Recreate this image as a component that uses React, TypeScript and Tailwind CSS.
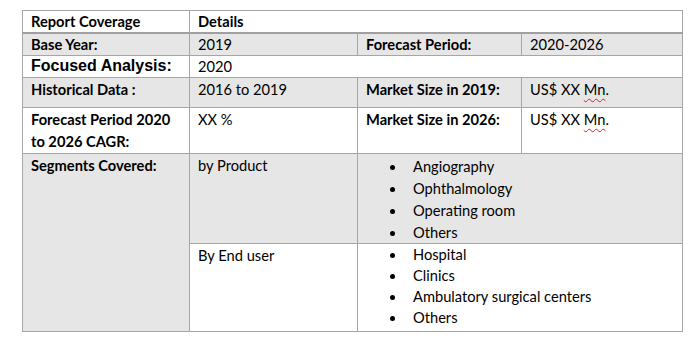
import React from "react";

const cal = { fontFamily: "Lato, 'Open Sans', sans-serif" };

function Mn() {
  return (
    <span>
      US$ XX{" "}
      <span className="underline decoration-wavy decoration-[#e02020] decoration-1 underline-offset-[3px]">Mn</span>.
    </span>
  );
}

function Bullets({ items, gap }: { items: string[]; gap: string }) {
  return (
    <ul className={`flex flex-col ${gap}`}>
      {items.map((t) => (
        <li key={t} className="flex items-center h-[20px]">
          <span className="ml-[24px] w-[5px] h-[5px] rounded-full bg-black shrink-0" />
          <span className="ml-[18px]">{t}</span>
        </li>
      ))}
    </ul>
  );
}

export default function App() {
  const base = "border border-[#a6a6a6] align-top pl-[8px] pr-[4px]";
  const td = `${base} leading-[20px] pt-[1px]`;
  const td2 = `${base} leading-[20px] pt-[2px]`;
  return (
    <div className="w-[690px] h-[341px] bg-white pt-[10px] pl-[22px]" style={cal}>
      <table className="table-fixed border-collapse text-[14.67px] text-black w-[660px]">
        <colgroup>
          <col className="w-[167px]" />
          <col className="w-[168px]" />
          <col className="w-[164px]" />
          <col className="w-[161px]" />
        </colgroup>
        <tbody>
          <tr className="h-[22px] bg-white">
            <td className={`${td} font-bold border-b-2 border-b-[#a0a0a0]`}>Report Coverage</td>
            <td colSpan={3} className={`${td} font-bold border-b-2 border-b-[#a0a0a0]`}>Details</td>
          </tr>
          <tr className="h-[22px] bg-[#e7e6e6]">
            <td className={`${td} font-bold`}>Base Year:</td>
            <td className={td}>2019</td>
            <td className={`${td} font-bold`}>Forecast Period:</td>
            <td className={td}>2020-2026</td>
          </tr>
          <tr className="h-[22px] bg-white">
            <td
              className={`${base} font-bold text-[16px] leading-[20px] pt-0`}
              style={{ fontFamily: "'Liberation Sans', Arial, sans-serif" }}
            >
              Focused Analysis:
            </td>
            <td colSpan={3} className={`${base} leading-[20px] pt-[1px]`}>2020</td>
          </tr>
          <tr className="h-[30px] bg-[#e7e6e6]">
            <td className={`${td2} font-bold`}>Historical Data :</td>
            <td className={td2}>2016 to 2019</td>
            <td className={`${td2} font-bold`}>Market Size in 2019:</td>
            <td className={td2}><Mn /></td>
          </tr>
          <tr className="h-[45px] bg-white">
            <td className={`${base} font-bold leading-[22px] pt-[1px]`}>Forecast Period 2020 to 2026 CAGR:</td>
            <td className={td2}>XX %</td>
            <td className={`${td2} font-bold`}>Market Size in 2026:</td>
            <td className={td2}><Mn /></td>
          </tr>
          <tr className="h-[90px] bg-[#e7e6e6]">
            <td rowSpan={2} className={`${td2} font-bold`}>Segments Covered:</td>
            <td className={td2}>by Product</td>
            <td colSpan={2} className={`${base} pt-[3px]`}>
              <Bullets gap="gap-[2px]" items={["Angiography", "Ophthalmology", "Operating room", "Others"]} />
            </td>
          </tr>
          <tr className="h-[88px] bg-white">
            <td className={td2}>By End user</td>
            <td colSpan={2} className={`${base} pt-[1px]`}>
              <Bullets gap="gap-[1px]" items={["Hospital", "Clinics", "Ambulatory surgical centers", "Others"]} />
            </td>
          </tr>
        </tbody>
      </table>
    </div>
  );
}
